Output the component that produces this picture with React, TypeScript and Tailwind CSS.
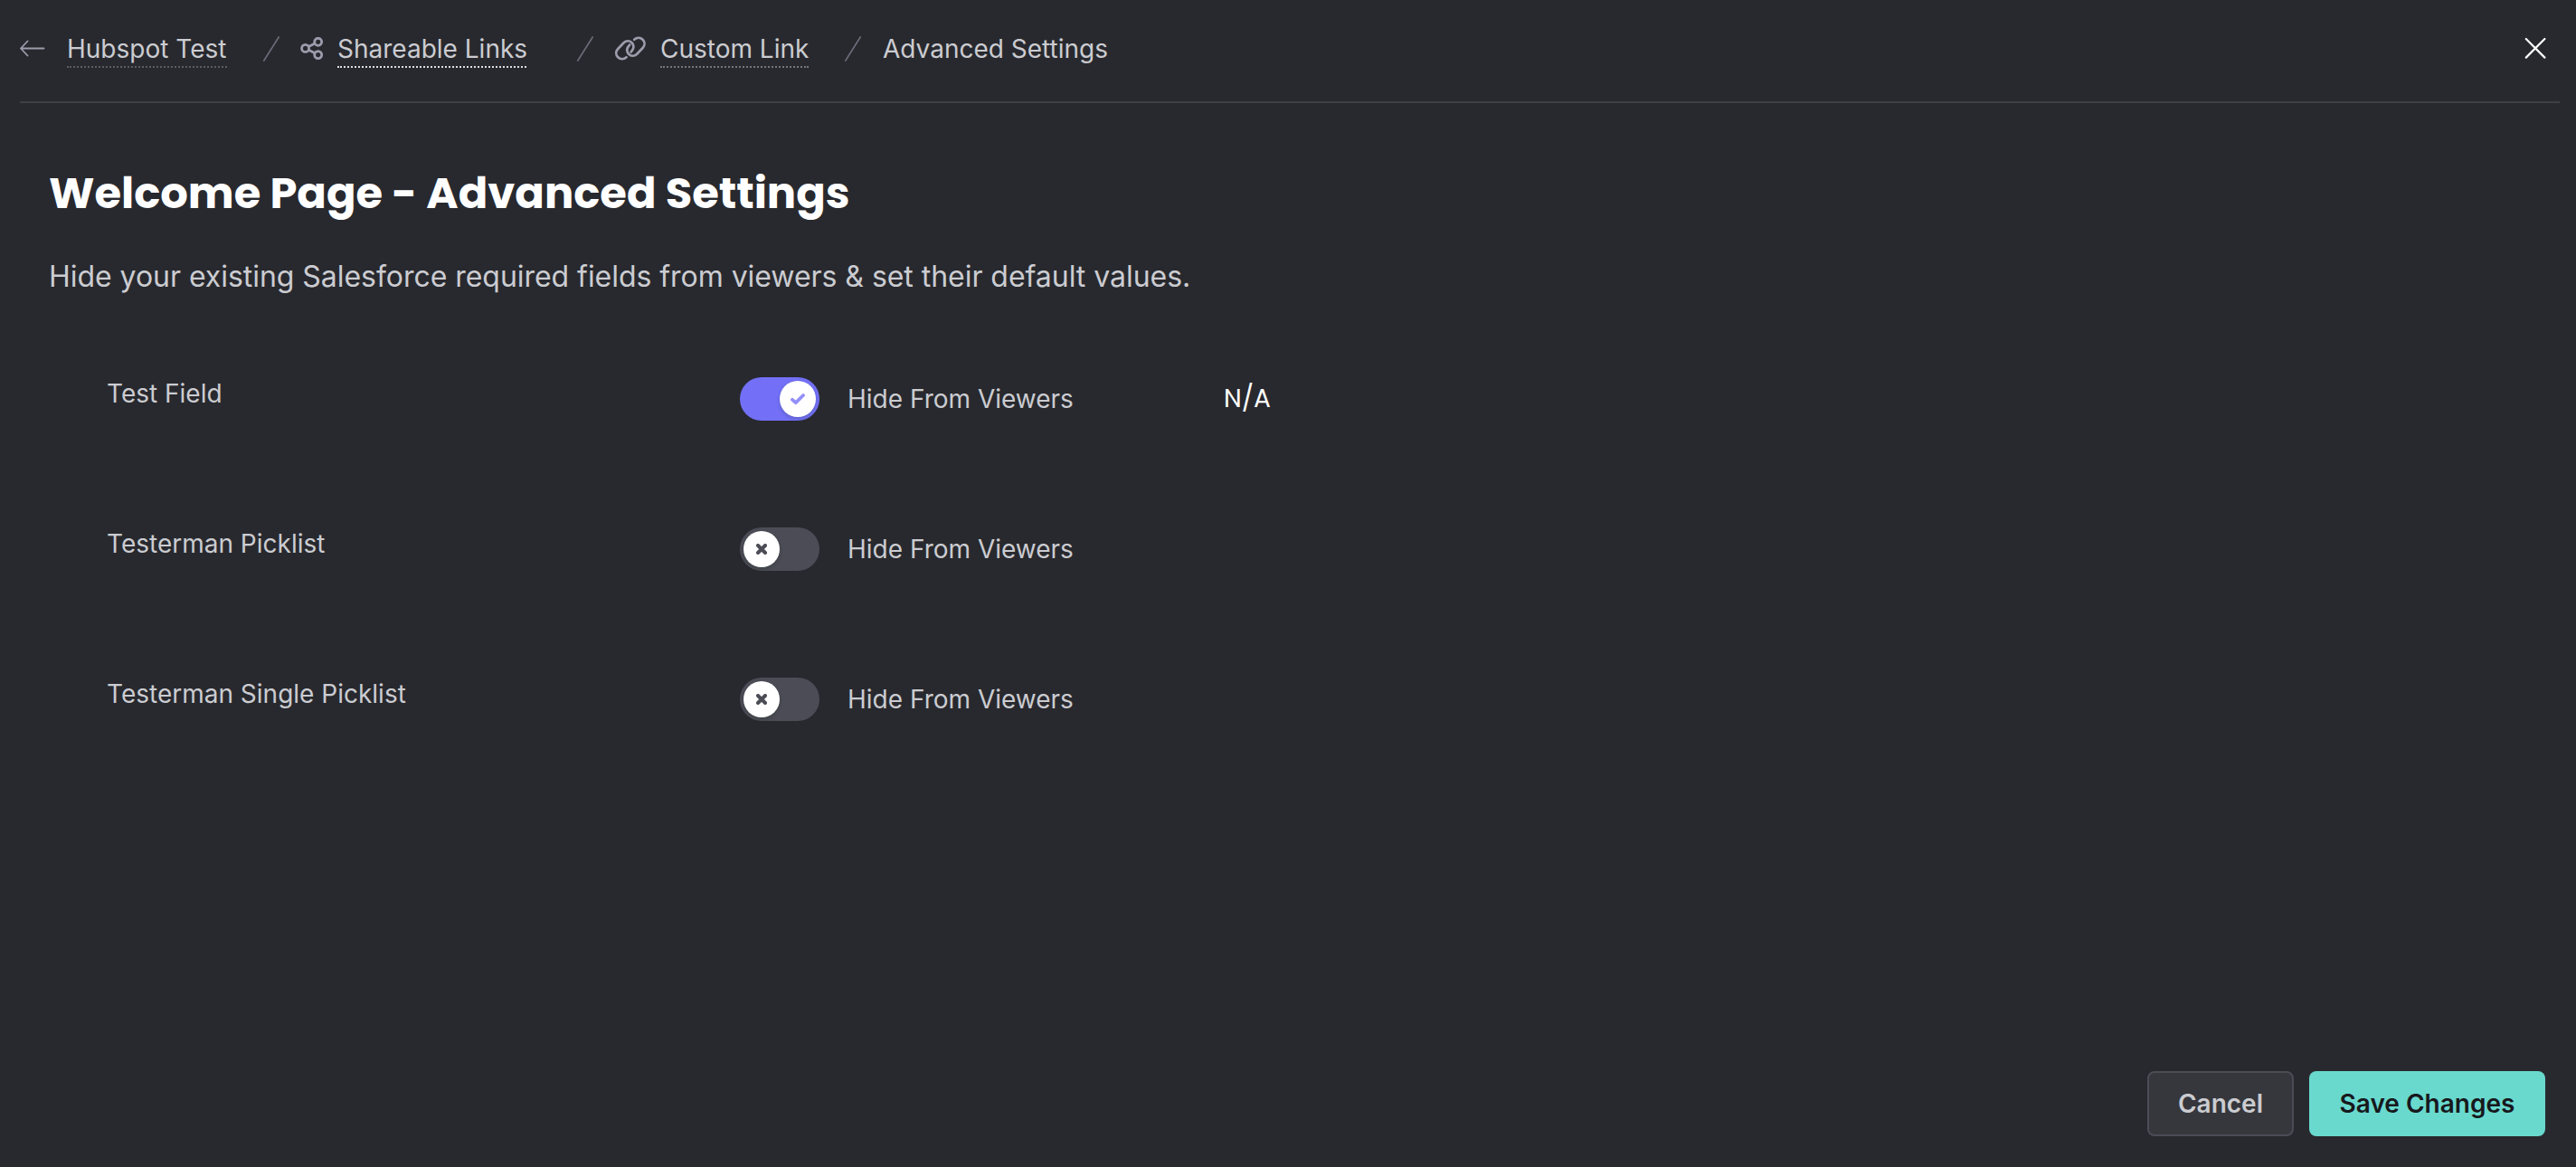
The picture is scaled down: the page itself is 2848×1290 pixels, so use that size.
import React, { useState } from 'react';

interface Field {
    name: string;
    hidden: boolean;
    defaultValue?: string;
}

const INITIAL_FIELDS: Field[] = [
    { name: 'Test Field', hidden: true, defaultValue: 'N/A' },
    { name: 'Testerman Picklist', hidden: false },
    { name: 'Testerman Single Picklist', hidden: false },
];

const Slash: React.FC<{ className?: string }> = ({ className }) => (
    <svg className={`h-[30px] w-5 shrink-0 ${className ?? ''}`} viewBox="0 0 20 30" fill="none" stroke="#6a6a78" strokeWidth="1.7">
        <path d="M1.8 28 18.2 2" strokeLinecap="round" />
    </svg>
);

const ShareIcon: React.FC = () => (
    <svg className="h-[26px] w-[26px] shrink-0" viewBox="0 0 26 26" fill="none" stroke="#9c9cac" strokeWidth="2.8">
        <circle cx="5.6" cy="12.4" r="4" />
        <circle cx="19.7" cy="5.3" r="4" />
        <circle cx="19.7" cy="19.6" r="4" />
        <path d="m9.2 10.6 7-3.5M9.2 14.2l7 3.5" />
    </svg>
);

const LinkIcon: React.FC = () => (
    <svg className="h-[28px] w-[36px] shrink-0" viewBox="0 0 36 28" fill="none" stroke="#9c9cac" strokeWidth="2.7" strokeLinecap="round">
        <path d="M13.6 23.2C10.8 25.8 6.8 25.8 4.2 23.2 1.6 20.6 1.6 16.8 4.2 14L10.6 7.2c2.8-2.7 6.9-2.6 9.2.2 2.4 2.9 2 6.8-1.2 10.1" />
        <path d="M22.2 3.8c2.8-2.6 6.8-2.6 9.4 0 2.6 2.6 2.6 6.4 0 9.2L25.2 19.8c-2.8 2.7-6.9 2.6-9.2-.2-2.4-2.9-2-6.8 1.2-10.1" />
    </svg>
);

interface ToggleProps {
    checked: boolean;
    onChange: () => void;
}

const Toggle: React.FC<ToggleProps> = ({ checked, onChange }) => (
    <button
        role="switch"
        aria-checked={checked}
        onClick={onChange}
        className={`flex h-12 w-[88px] shrink-0 rounded-full p-1 ${checked ? 'justify-end bg-[#7370f7]' : 'justify-start bg-[#4b4c56]'}`}
    >
        <span className="flex h-10 w-10 items-center justify-center rounded-full bg-white shadow-[0_2px_4px_rgba(0,35,11,0.2)]">
            {checked ? (
                <svg className="h-4 w-4" viewBox="0 0 16 16" fill="none" stroke="#9390fa" strokeWidth="3.8" strokeLinecap="round" strokeLinejoin="round">
                    <path d="m2 8.8 3.8 3.4L14 4" />
                </svg>
            ) : (
                <svg className="h-3 w-3" viewBox="0 0 12 12" fill="none" stroke="#4b4c56" strokeWidth="4" strokeLinecap="round">
                    <path d="m2 2 8 8M10 2l-8 8" />
                </svg>
            )}
        </span>
    </button>
);

const Header: React.FC = () => (
    <header className="ml-[22px] mr-[18px] flex h-[114px] items-start border-b-2 border-[#3e3f45] pt-[32px] text-[28px]">
        <svg className="mt-[12px] h-5 w-[28px] shrink-0" viewBox="0 0 28 20" fill="none" stroke="#9c9cac" strokeWidth="1.8" strokeLinecap="round" strokeLinejoin="round">
            <path d="M26.5 9.5H1M8.5 1.5 1 9.5l7.5 8" />
        </svg>
        <a href="#" className="ml-[24px] h-[43px] w-[177px] whitespace-nowrap border-b-2 border-dotted border-[#5b5c64] leading-[45px]">Hubspot Test</a>
        <Slash className="ml-[39px] mt-[7px]" />
        <span className="ml-[22px] mt-[9px]"><ShareIcon /></span>
        <a href="#" className="ml-[15px] h-[43px] w-[209px] whitespace-nowrap border-b-2 border-dotted border-[#dedee2] leading-[45px]">Shareable Links</a>
        <Slash className="ml-[55px] mt-[7px]" />
        <span className="ml-[22px] mt-[8px]"><LinkIcon /></span>
        <a href="#" className="ml-[15px] h-[43px] w-[164px] whitespace-nowrap border-b-2 border-dotted border-[#75757f] leading-[45px]">Custom Link</a>
        <Slash className="ml-[39px] mt-[7px]" />
        <span className="ml-[23px] whitespace-nowrap leading-[45px]">Advanced Settings</span>
        <button aria-label="Close" className="ml-auto mr-[15px] mt-[9px]">
            <svg className="h-6 w-6" viewBox="0 0 24 24" fill="none" stroke="#ffffff" strokeWidth="2.2" strokeLinecap="round">
                <path d="m1.8 2 20.6 20.6M22.4 2 1.8 22.6" />
            </svg>
        </button>
    </header>
);

const App: React.FC = () => {
    const [fields, setFields] = useState<Field[]>(INITIAL_FIELDS);

    const toggleField = (name: string) => {
        setFields(prev => prev.map(f => (f.name === name ? { ...f, hidden: !f.hidden } : f)));
    };

    return (
        <div className="flex h-[1290px] w-[2848px] flex-col overflow-hidden bg-[#28292e] font-['Inter',sans-serif] text-[#cbccd1]">
            <Header />
            <main className="flex-1 pl-[54px] pt-[65px]">
                <h1 className="whitespace-nowrap font-['Poppins','Inter',sans-serif] text-[48px] font-bold leading-[70px] text-white">Welcome Page - Advanced Settings</h1>
                <p className="mt-[33px] whitespace-nowrap text-[32px] leading-[48px] tracking-[-0.04px]">Hide your existing Salesforce required fields from viewers &amp; set their default values.</p>
                <ul className="mt-[87px] flex flex-col gap-[118px] pl-[64px] text-[28px]">
                    {fields.map(field => (
                        <li key={field.name} className="flex h-12 items-center">
                            <span className="w-[700px] pb-[12px] leading-9">{field.name}</span>
                            <Toggle checked={field.hidden} onChange={() => toggleField(field.name)} />
                            <span className="ml-[31px] w-[416px] leading-9">Hide From Viewers</span>
                            {field.defaultValue && <span className="font-['Poppins','Inter',sans-serif] leading-9 text-white">{field.defaultValue}</span>}
                        </li>
                    ))}
                </ul>
            </main>
            <footer className="flex justify-end gap-[17px] pb-[34px] pr-[34px] text-[28px] font-semibold">
                <button className="h-[72px] w-[162px] rounded-lg border-2 border-[#4b4c56] bg-[#36373c]">Cancel</button>
                <button className="h-[72px] w-[261px] rounded-lg bg-[#69d9ce] text-[#17181c]">Save Changes</button>
            </footer>
        </div>
    );
};

export default App;
